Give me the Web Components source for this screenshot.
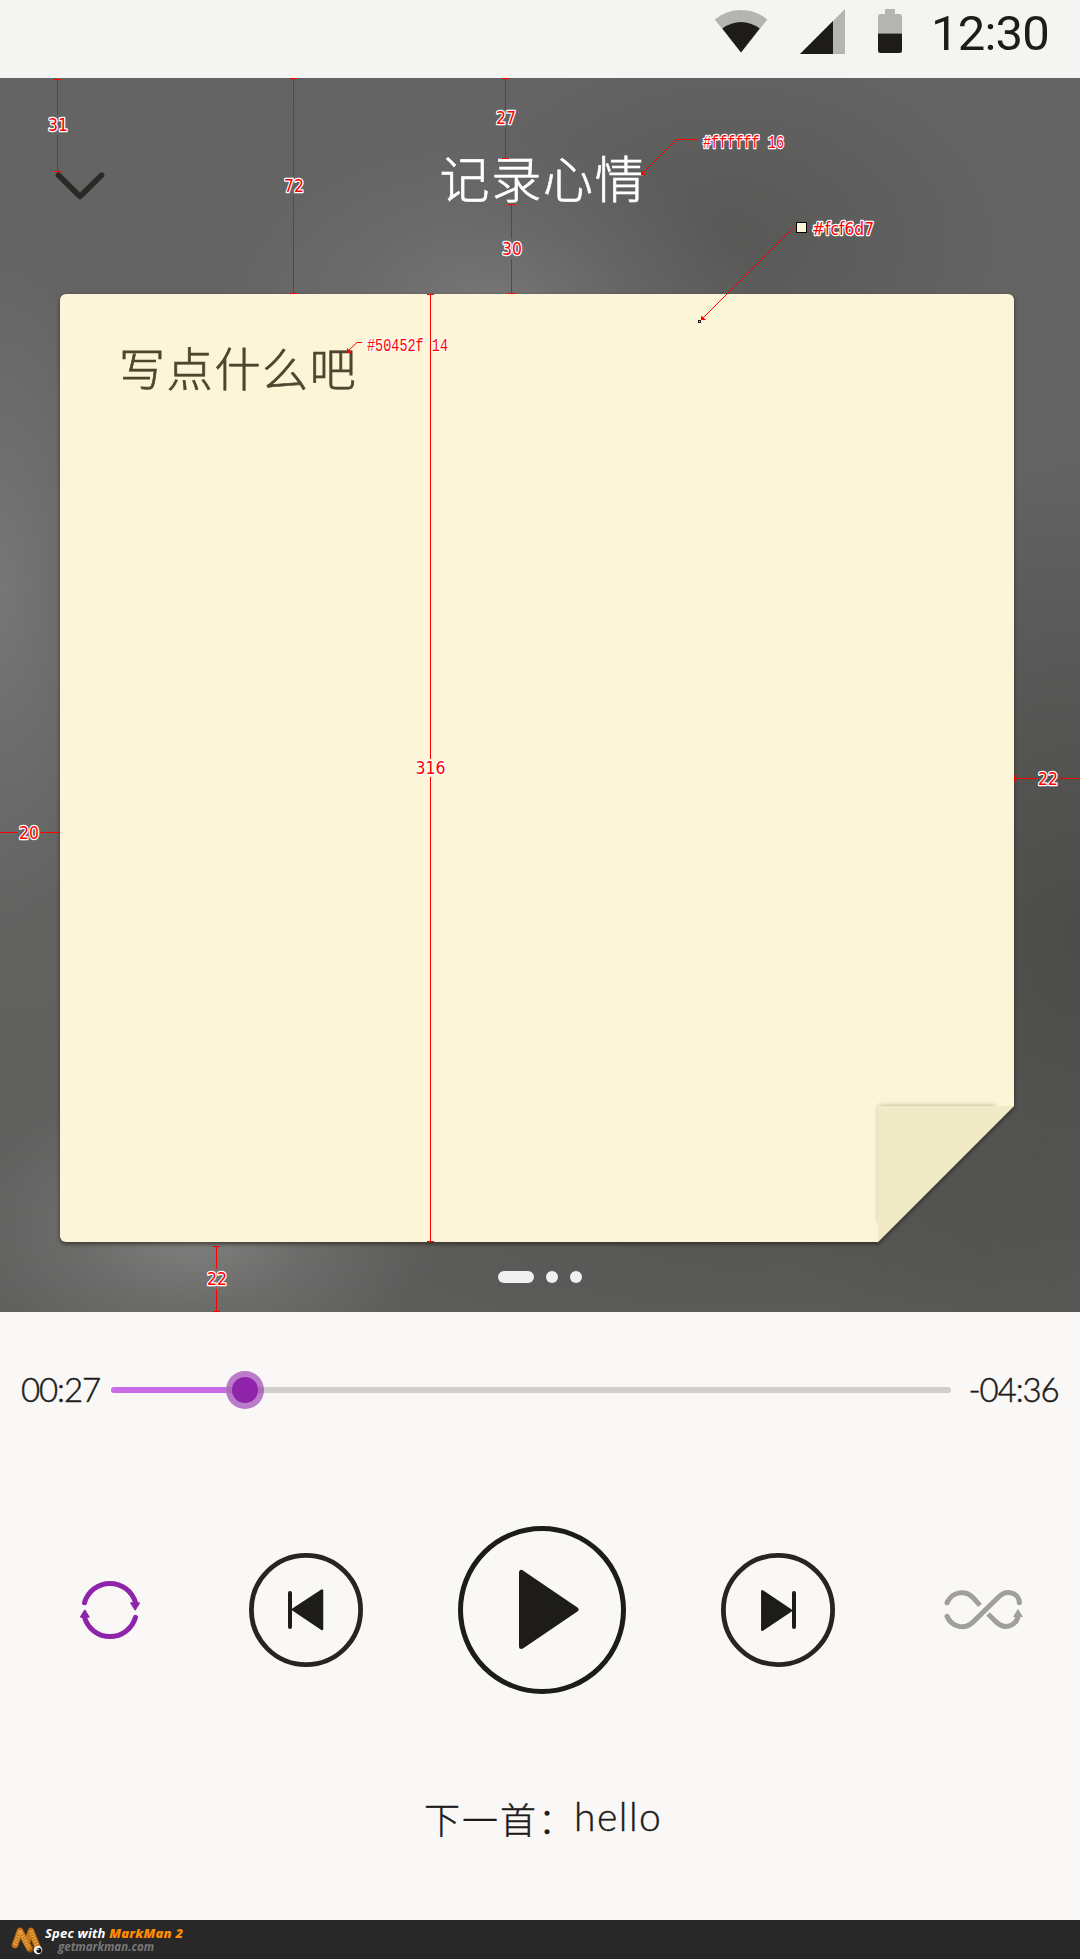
<!DOCTYPE html>
<html lang="zh-CN">
<head>
<meta charset="utf-8">
<title>记录心情</title>
<style>
html,body{margin:0;padding:0}
body{width:1080px;height:1959px;overflow:hidden;background:#f9f8f6;font-family:"Noto Sans CJK SC",sans-serif}
</style>
</head>
<body>
<music-app></music-app>
<script>
function define(name, html) {
  const tpl = document.createElement('template');
  tpl.innerHTML = html;
  customElements.define(name, class extends HTMLElement {
    constructor() {
      super();
      this.attachShadow({ mode: 'open' }).appendChild(tpl.content.cloneNode(true));
    }
  });
}

define('status-bar', `
<style>
:host{display:flex;height:78px;background:#f4f4f2;box-sizing:border-box;padding:0 28px 0 714px;color:#1d1c1a}
svg{display:block;flex:none}
.wifi{margin:9px 32px 0 0}.cell{margin:9px 33px 0 0}.bat{margin:9px 29px 0 0}
span{font:400 49px/67px Roboto,sans-serif;letter-spacing:-.8px;white-space:nowrap}
</style>
<svg class="wifi" width="54" height="44" viewBox="714 9 54 44"><path d="M741 52.5L714.7 19.5Q726 10 741 10T767.3 19.5Z" fill="#b4b4b2"/><path d="M741 52.5L722.3 28.5Q731 22 741 22T759.7 28.5Z" fill="#1d1c1a"/></svg>
<svg class="cell" width="45" height="45"><path d="M0 45L45 0V45Z" fill="#b4b4b2"/><path d="M0 45L33 12V45Z" fill="#1d1c1a"/></svg>
<svg class="bat" width="24" height="44"><path d="M7 0H17V5H21.5Q24 5 24 7.500V24.500H0V7.500Q0 5 2.500 5H7Z" fill="#b4b4b2"/><path d="M0 24.500H24V41.500Q24 44 21.500 44H2.500Q0 44 0 41.500Z" fill="#1d1c1a"/></svg>
<span>12:30</span>`);

define('nav-header', `
<style>
:host{display:grid;grid-template-columns:1fr auto 1fr;height:216px;box-sizing:border-box;padding:62px 55px 0}
svg{display:block;margin-top:31px}
h1{margin:0 -3px 0 3px;font:300 50px/72px "Noto Sans CJK SC",sans-serif;letter-spacing:1.800px;color:#fff;-webkit-text-stroke:.7px #fff}
</style>
<svg width="50" height="30"><path d="M3.500 4.200L25 25.500L46.500 4.200" fill="none" stroke="#2a2926" stroke-width="5.600" stroke-linecap="round" stroke-linejoin="round"/></svg>
<h1><slot></slot></h1><i></i>`);

define('note-card', `
<style>
:host{display:block;width:954px;height:948px;margin-left:60px;filter:drop-shadow(0 2px 2px rgba(25,20,5,.6))}
.paper{height:948px;box-sizing:border-box;padding:37px 59px;background:#fcf5d7;border-radius:6px;clip-path:polygon(0 0,100% 0,100% 812px,818px 100%,0 100%);display:grid;grid-template-columns:1fr 77px}
p{margin:0;font:300 46px/70px "Noto Sans CJK SC",sans-serif;letter-spacing:1.700px;color:#50452f;-webkit-text-stroke:.7px #50452f}
svg{align-self:end;display:block;margin-bottom:-37px;overflow:visible}
</style>
<div class="paper"><p><slot></slot></p>
<svg width="136" height="136"><defs><filter id="s" x="-20%" y="-20%" width="140%" height="140%"><feGaussianBlur stdDeviation="2.500"/></filter></defs><path d="M1 0H117V20H20V117H1Z" fill="#8b8050" opacity=".65" filter="url(#s)"/><path d="M0 0H136L0 136Z" fill="#f0eac7"/></svg></div>`);

define('page-dots', `
<style>
:host{display:flex;gap:12px;height:70px;padding-left:498px;align-items:center}
i{width:12px;height:12px;border-radius:6px;background:#f0f0f0}.on{width:36px}
</style><i class="on"></i><i></i><i></i>`);

define('spec-layer', `
<style>
:host{position:absolute;inset:0;display:block}
svg{display:block}
.l{stroke:#f00;stroke-width:1;fill:none;shape-rendering:crispEdges}
.d{stroke:#f00;stroke-width:1;fill:none}
text{fill:#f00;stroke:#fff;stroke-width:2.600px;paint-order:stroke;stroke-linejoin:round}
.n{font:17.500px "DejaVu Sans",sans-serif;text-anchor:middle}
.m{font:17.500px "Liberation Mono",monospace}
</style>
<svg width="1080" height="1234" viewBox="0 78 1080 1234">
<g class="l">
<path d="M57.500 79V115M57.500 135V171M54 79.500H61M54 171.500H61"/>
<path d="M293.500 78V176M293.500 195V293M290 78.500H297M290 293.500H297"/>
<path d="M505.500 78V109M505.500 128V158M502 78.500H509M502 158.500H509"/>
<path d="M511.500 204V239M511.500 259V293M508 204.500H515M508 293.500H515"/>
<path d="M430.500 294V759M430.500 777V1242M427 294.500H434M427 1241.500H434"/>
<path d="M216.500 1246V1269M216.500 1289V1311M213 1246.500H220M213 1311.500H220"/>
<path d="M0 832.500H18M40 832.500H60M59.500 829V836"/>
<path d="M1014 778.500H1037M1060 778.500H1080M1014.500 775V782"/>
</g>
<g class="d">
<path d="M698 139.500H676.500L642 174"/><path d="M793 228L702 319"/><path d="M362 342.500H357L348 351"/>
</g>
<g fill="#f00"><path d="M641 170V175H646Z"/><path d="M701 315.500V320H706Z"/><path d="M347 348V353H352Z"/></g>
<rect x="698.500" y="320.500" width="2" height="2" fill="#fff" stroke="#112"/>
<rect x="796.500" y="222.500" width="10" height="10" fill="#fcf6d7" stroke="#000"/>
<g class="n">
<text x="58" y="130.500" textLength="20" lengthAdjust="spacingAndGlyphs">31</text><text x="294" y="191.500" textLength="20" lengthAdjust="spacingAndGlyphs">72</text><text x="506" y="123.500" textLength="20" lengthAdjust="spacingAndGlyphs">27</text><text x="512" y="254.500" textLength="20" lengthAdjust="spacingAndGlyphs">30</text>
<text x="430.500" y="774" textLength="30" lengthAdjust="spacingAndGlyphs">316</text><text x="217" y="1284.500" textLength="20" lengthAdjust="spacingAndGlyphs">22</text><text x="29" y="838.500" textLength="20" lengthAdjust="spacingAndGlyphs">20</text><text x="1048" y="784.500" textLength="20" lengthAdjust="spacingAndGlyphs">22</text>
<text x="843" y="235" textLength="62" lengthAdjust="spacingAndGlyphs">#fcf6d7</text>
</g>
<text class="m" x="703" y="148" textLength="81" lengthAdjust="spacingAndGlyphs">#ffffff 16</text>
<text class="m" x="367" y="351" textLength="81" lengthAdjust="spacingAndGlyphs">#50452f 14</text>
</svg>`);

define('mood-stage', `
<style>
:host{display:block;position:relative;height:1234px;overflow:hidden;
background:
radial-gradient(ellipse 270px 170px at 490px 230px,rgba(134,134,134,.55),rgba(134,134,134,.2) 50%,transparent),
radial-gradient(ellipse 280px 200px at 730px 160px,rgba(76,76,74,.5),rgba(76,76,74,.25) 50%,transparent),
radial-gradient(ellipse 130px 340px at 0px 510px,rgba(134,134,134,.55),rgba(134,134,134,.26) 50%,transparent),
radial-gradient(ellipse 240px 150px at 195px 1155px,rgba(145,145,145,.65),rgba(140,140,140,.28) 50%,transparent),
radial-gradient(ellipse 400px 480px at 1080px 860px,rgba(66,66,64,.7),rgba(66,66,64,.4) 50%,transparent),
radial-gradient(ellipse 500px 140px at 740px 1160px,rgba(78,78,76,.5),rgba(78,78,76,.28) 50%,transparent),
linear-gradient(#656464,#636362 60%,#5f5e5c)}
</style>
<nav-header>记录心情</nav-header>
<note-card>写点什么吧</note-card>
<page-dots></page-dots>
<spec-layer></spec-layer>`);

define('seek-bar', `
<style>
:host{display:flex;align-items:center;height:156px;color:#1d1c1a}
.t{font:300 33px/44px Lato,sans-serif;letter-spacing:-1.100px;white-space:nowrap;box-sizing:border-box;margin-top:-3px;-webkit-text-stroke:.5px #1d1c1a}
.a{width:111px;padding-left:21px}.b{padding-left:17.500px}
.track{width:840px;height:6px;border-radius:3px;background:#d0cfcc;display:flex;align-items:center}
.fill{width:115px;height:6px;border-radius:3px 0 0 3px;background:#cc6be8}
.thumb{flex:none;width:26px;height:26px;border-radius:50%;background:#8f24aa;box-shadow:0 0 0 6px rgba(147,46,174,.62);margin-left:6px}
</style>
<span class="t a">00:27</span><div class="track"><div class="fill"></div><div class="thumb"></div></div><span class="t b">-04:36</span>`);

define('icon-button', `
<style>:host{display:block;flex:none}::slotted(svg){display:block}</style><slot></slot>`);

define('player-controls', `
<style>
:host{display:flex;align-items:center;height:284px;padding-left:80px;color:#1d1c1a}
.g1{margin-left:109px}.g2{margin-left:95px}
svg{overflow:visible}
</style>
<icon-button><svg width="60" height="60" viewBox="80 1580 60 60"><g fill="none" stroke="#8f24aa" stroke-width="5" stroke-linecap="round"><path d="M84.500 1602.700A26.500 26.500 0 0 1 135.500 1602.700"/><path d="M135.500 1617.300A26.500 26.500 0 0 1 84.500 1617.300"/></g><path d="M131 1603H139.200L135.200 1609.700ZM80.800 1617L84.800 1610.500L88.800 1617Z" fill="#8f24aa" stroke="#8f24aa" stroke-width="1.600" stroke-linejoin="round"/></svg></icon-button>
<icon-button class="g1"><svg width="114" height="114" viewBox="249 1553 114 114"><circle cx="306" cy="1610" r="54.600" fill="none" stroke="#282521" stroke-width="4.800"/><path d="M290 1593V1627" stroke="#1d1c1a" stroke-width="4" stroke-linecap="round"/><path d="M293 1609.500L322 1590.500V1629Z" fill="#1d1c1a" stroke="#1d1c1a" stroke-width="2.500" stroke-linejoin="round"/></svg></icon-button>
<icon-button class="g2"><svg width="168" height="168" viewBox="458 1526 168 168"><circle cx="542" cy="1610" r="81.500" fill="none" stroke="#1d1c1a" stroke-width="5"/><path d="M521.500 1572.500V1646.500L576 1609.500Z" fill="#1d1c1a" stroke="#1d1c1a" stroke-width="5" stroke-linejoin="round"/></svg></icon-button>
<icon-button class="g2"><svg width="114" height="114" viewBox="721 1553 114 114"><circle cx="778" cy="1610" r="54.600" fill="none" stroke="#282521" stroke-width="4.800"/><path d="M794 1593V1627" stroke="#1d1c1a" stroke-width="4" stroke-linecap="round"/><path d="M762.300 1591.200V1629.700L791 1610.500Z" fill="#1d1c1a" stroke="#1d1c1a" stroke-width="2.500" stroke-linejoin="round"/></svg></icon-button>
<icon-button class="g1"><svg width="79" height="42" viewBox="912 237 237 126"><g fill="none" stroke="#a09f9d" stroke-width="15"><path d="M921 278C938 242 978 241 998 262L1020 286"/><path d="M921 319C936 354 976 358 998 337L1075 262C1100 235 1138 250 1138 278"/><path d="M1044 312L1070 337C1092 359 1130 350 1134 316"/></g><path d="M1119 321L1134 296L1149 321Z" fill="#a09f9d"/><g fill="#a09f9d"><circle cx="921" cy="278" r="7.500"/><circle cx="921" cy="319" r="7.500"/><circle cx="1138" cy="278" r="7.500"/></g></svg></icon-button>`);

define('next-track', `
<style>
:host{display:flex;height:168px;padding:38px 0 0 424px;box-sizing:border-box;color:#1d1c1a;white-space:nowrap;-webkit-text-stroke:.4px #1d1c1a}
.c{font:300 36px/56px "Noto Sans CJK SC",sans-serif;letter-spacing:2px;width:150px}
.e{font:300 39px/53px Lato,sans-serif;letter-spacing:1.500px}
</style>
<span class="c">下一首：</span><span class="e"><slot></slot></span>`);

define('spec-footer', `
<style>
:host{display:flex;height:39px;background:#282828;padding-left:11px}
svg{display:block;margin:6px 1px 0 0}
div{font:italic 700 13px/13px "Open Sans",sans-serif;letter-spacing:.2px;color:#fff;padding-top:7px;white-space:nowrap}
b{color:#ff8c00}
small{display:block;font:italic 700 11.500px/13px "Open Sans",sans-serif;letter-spacing:0;color:#777;padding-left:13px}
</style>
<svg width="33" height="30"><g fill="none" stroke-linecap="round"><g stroke="#8c4a0c" stroke-width="7"><path d="M9 5L4 19M9 5L19 23M20 5L16 16M20 5L27 23"/></g><g stroke="#c77a1c" stroke-width="5.600"><path d="M9 5L4 19M20 5L16 16M9 5L18 22M20 5L27 22"/></g><g stroke="#eeb050" stroke-width="4.200" stroke-dasharray="1 1.700" stroke-linecap="butt"><path d="M9 5L4 19M9 5L18 22M20 5L27 22"/></g></g><circle cx="27" cy="24" r="4.300" fill="#eee"/><circle cx="28" cy="24.500" r="2.500" fill="#111"/><circle cx="27" cy="23.500" r=".8" fill="#fff"/></svg>
<div>Spec with <b>MarkMan 2</b><small>getmarkman.com</small></div>`);

define('music-app', `
<style>:host{display:flex;flex-direction:column;width:1080px;height:1959px;background:#f9f8f6}</style>
<status-bar></status-bar>
<mood-stage></mood-stage>
<seek-bar></seek-bar>
<player-controls></player-controls>
<next-track>hello</next-track>
<spec-footer></spec-footer>`);
</script>
</body>
</html>
